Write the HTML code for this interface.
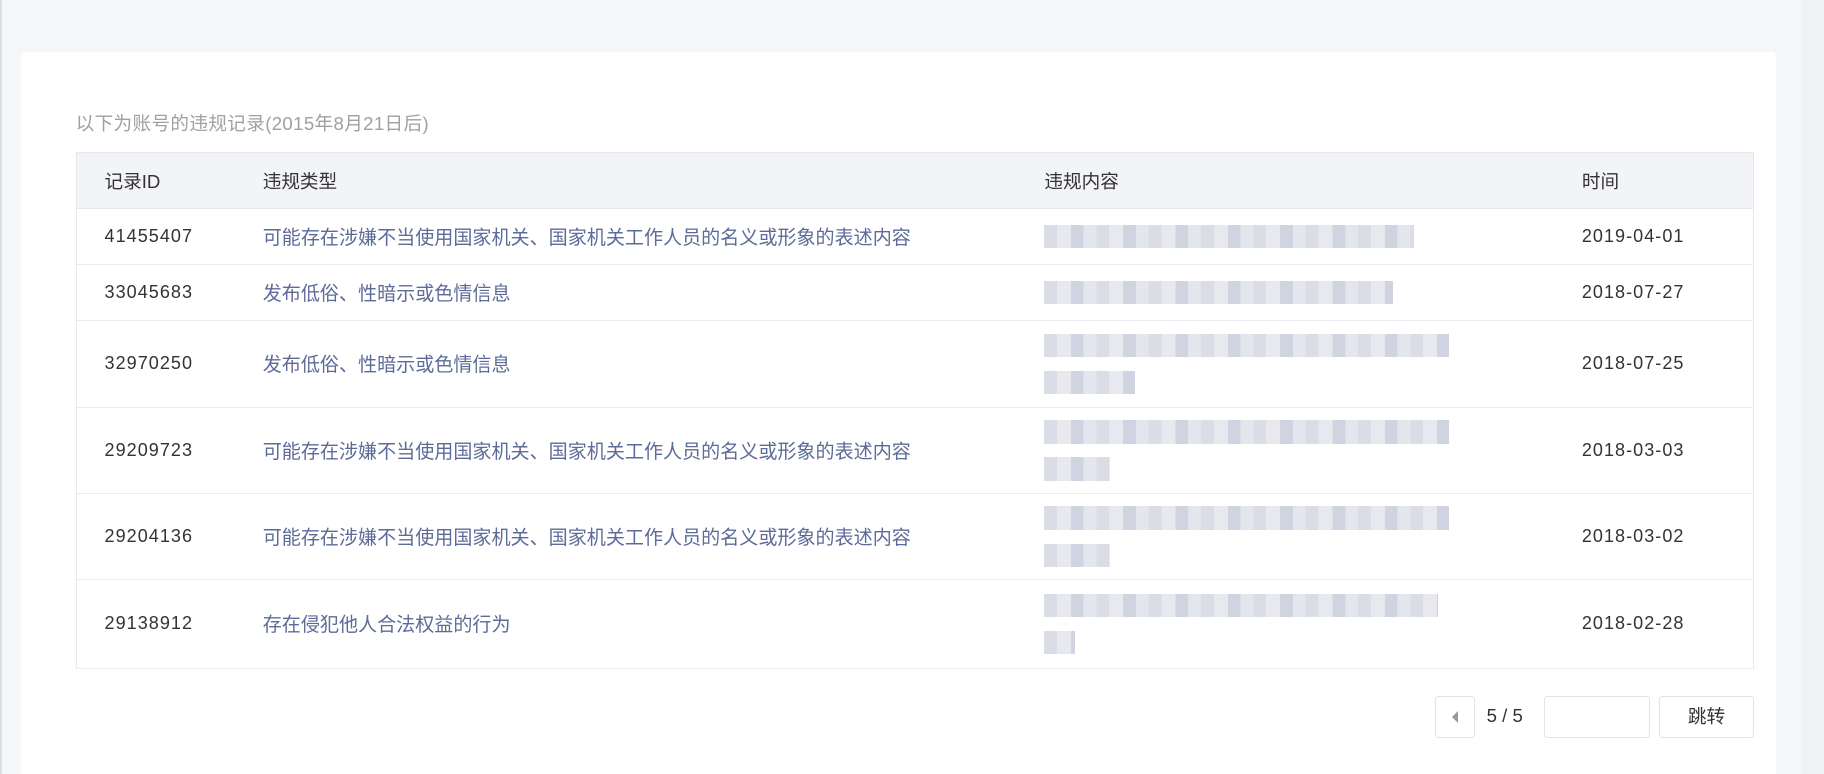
<!DOCTYPE html>
<html><head><meta charset="utf-8"><style>
html,body{margin:0;padding:0;}
body{width:1568px;height:665px;overflow:hidden;background:#f5f6f8;zoom:1.16327;font-family:"Liberation Sans","Noto Sans CJK SC",sans-serif;position:relative;}
.lb{position:absolute;left:0;top:0;width:2px;height:665px;background:#dcdde0}
.card{position:absolute;left:18px;top:45px;width:1509px;height:620px;background:#fff;border-radius:4px 4px 0 0}
.rs{position:absolute;left:1548px;top:0;width:20px;height:665px;background:#f0f1f3}
.title{position:absolute;left:65px;top:94px;font-size:16px;color:#a0a0a0;letter-spacing:0.3px}
table{position:absolute;left:65px;top:131px;width:1443px;border-collapse:collapse;border:1px solid #e6e8ec;font-size:15.5px;color:#333}
th{background:#f3f4f7;font-weight:normal;text-align:left;height:47px;padding:0;border-bottom:1px solid #e6e8ec;font-size:16px}
td{padding:0;border-bottom:1px solid #e9eaee;vertical-align:middle}
.c1{padding-left:24px;width:136px}
.n{letter-spacing:0.9px}
.c2{width:672px;color:#5d6b98}
td.c2{font-size:16.4px}
.c3{width:462px}
.blur{display:flex;flex-direction:column;gap:12px}
.bl{height:20px;background:repeating-linear-gradient(90deg,#d3d7e2 0 11px,#e3e5ec 11px 23px,#c8cdda 23px 34px,#dfe2ea 34px 45px);opacity:.85}
.pg{position:absolute;top:598px;height:36px;border:1px solid #e3e4e8;border-radius:3px;background:#fff;box-sizing:border-box}
</style></head><body>
<div class="lb"></div><div class="rs"></div>
<div class="card"></div>
<div class="title">以下为账号的违规记录(2015年8月21日后)</div>
<table>
<tr><th class="c1">记录ID</th><th class="c2" style="color:#333">违规类型</th><th class="c3">违规内容</th><th>时间</th></tr>
<tr style="height:48px"><td class="c1 n">41455407</td><td class="c2">可能存在涉嫌不当使用国家机关、国家机关工作人员的名义或形象的表述内容</td><td><div class="blur"><div class="bl" style="width:318px"></div></div></td><td class="n">2019-04-01</td></tr>
<tr style="height:48px"><td class="c1 n">33045683</td><td class="c2">发布低俗、性暗示或色情信息</td><td><div class="blur"><div class="bl" style="width:300px"></div></div></td><td class="n">2018-07-27</td></tr>
<tr style="height:75px"><td class="c1 n">32970250</td><td class="c2">发布低俗、性暗示或色情信息</td><td><div class="blur"><div class="bl" style="width:348px"></div><div class="bl" style="width:78px"></div></div></td><td class="n">2018-07-25</td></tr>
<tr style="height:74px"><td class="c1 n">29209723</td><td class="c2">可能存在涉嫌不当使用国家机关、国家机关工作人员的名义或形象的表述内容</td><td><div class="blur"><div class="bl" style="width:348px"></div><div class="bl" style="width:56px"></div></div></td><td class="n">2018-03-03</td></tr>
<tr style="height:74px"><td class="c1 n">29204136</td><td class="c2">可能存在涉嫌不当使用国家机关、国家机关工作人员的名义或形象的表述内容</td><td><div class="blur"><div class="bl" style="width:348px"></div><div class="bl" style="width:56px"></div></div></td><td class="n">2018-03-02</td></tr>
<tr style="height:76px"><td class="c1 n">29138912</td><td class="c2">存在侵犯他人合法权益的行为</td><td><div class="blur"><div class="bl" style="width:338px"></div><div class="bl" style="width:26px"></div></div></td><td class="n">2018-02-28</td></tr>
</table>
<div class="pg" style="left:1234px;width:34px"><div style="position:absolute;left:13px;top:12px;width:0;height:0;border-top:6px solid transparent;border-bottom:6px solid transparent;border-right:6px solid #999"></div></div>
<div style="position:absolute;left:1278px;top:606px;font-size:16px;color:#333">5 / 5</div>
<div class="pg" style="left:1327px;width:91px"></div>
<div class="pg" style="left:1426px;width:82px;text-align:center;line-height:34px;font-size:16px;color:#333">跳转</div>
</body></html>
